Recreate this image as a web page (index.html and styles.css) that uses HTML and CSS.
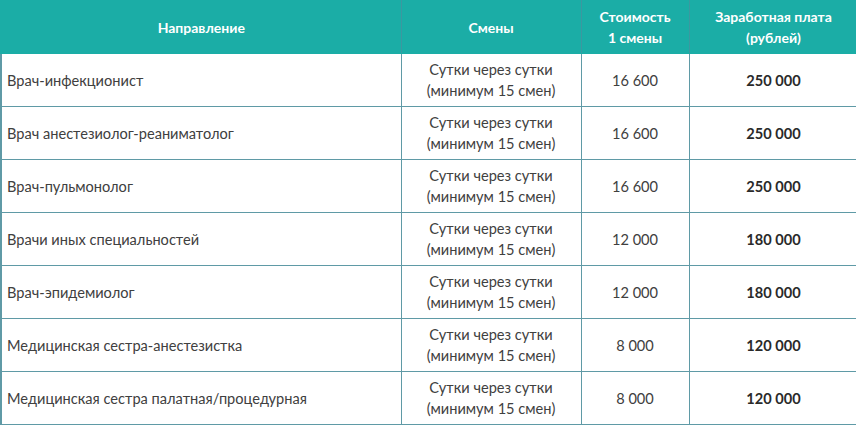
FILE: index.html
```html
<!DOCTYPE html>
<html lang="ru">
<head>
<meta charset="utf-8">
<link rel="stylesheet" href="styles.css">
</head>
<body>
<table class="tbl">
  <colgroup>
    <col class="c1"><col class="c2"><col class="c3"><col class="c4">
  </colgroup>
  <thead>
    <tr>
      <th>Направление</th>
      <th>Смены</th>
      <th>Стоимость<br>1 смены</th>
      <th>Заработная плата<br>(рублей)</th>
    </tr>
  </thead>
  <tbody>
    <tr><td class="name">Врач-инфекционист</td><td>Сутки через сутки<br>(минимум 15 смен)</td><td>16 600</td><td class="sum">250 000</td></tr>
    <tr><td class="name">Врач анестезиолог-реаниматолог</td><td>Сутки через сутки<br>(минимум 15 смен)</td><td>16 600</td><td class="sum">250 000</td></tr>
    <tr><td class="name">Врач-пульмонолог</td><td>Сутки через сутки<br>(минимум 15 смен)</td><td>16 600</td><td class="sum">250 000</td></tr>
    <tr><td class="name">Врачи иных специальностей</td><td>Сутки через сутки<br>(минимум 15 смен)</td><td>12 000</td><td class="sum">180 000</td></tr>
    <tr><td class="name">Врач-эпидемиолог</td><td>Сутки через сутки<br>(минимум 15 смен)</td><td>12 000</td><td class="sum">180 000</td></tr>
    <tr><td class="name">Медицинская сестра-анестезистка</td><td>Сутки через сутки<br>(минимум 15 смен)</td><td>8 000</td><td class="sum">120 000</td></tr>
    <tr><td class="name">Медицинская сестра палатная/процедурная</td><td>Сутки через сутки<br>(минимум 15 смен)</td><td>8 000</td><td class="sum">120 000</td></tr>
  </tbody>
</table>
</body>
</html>
```

FILE: styles.css
```css
html, body {
  margin: 0;
  padding: 0;
  background: #ffffff;
}
body {
  font-family: Lato, "Open Sans", sans-serif;
  color: #404040;
}
.tbl {
  border-collapse: collapse;
  table-layout: fixed;
  width: 857px;
}
.c1 { width: 400px; }
.c2 { width: 180px; }
.c3 { width: 108px; }
.c4 { width: 169px; }
.tbl th {
  background: #1bada6;
  color: #ffffff;
  font-weight: 700;
  font-size: 14px;
  line-height: 21px;
  height: 53px;
  padding: 0 4px;
  box-sizing: border-box;
  text-align: center;
  vertical-align: middle;
  border: 1px solid #1bada6;
  border-right-color: #3c98a0;
}
.tbl td {
  font-size: 14.6px;
  line-height: 21px;
  height: 53px;
  box-sizing: border-box;
  padding: 5px 4px;
  text-align: center;
  vertical-align: middle;
  border: 1px solid #5f9aa6;
}
.tbl td.name {
  text-align: left;
  padding-left: 5px;
}
.tbl td.sum {
  font-weight: 700;
  color: #2a2a2a;
}
.tbl tr > :first-child {
  border-left: 2px solid #5f9aa6;
}
.tbl thead tr > :first-child {
  border-left-color: #1bada6;
}
```
